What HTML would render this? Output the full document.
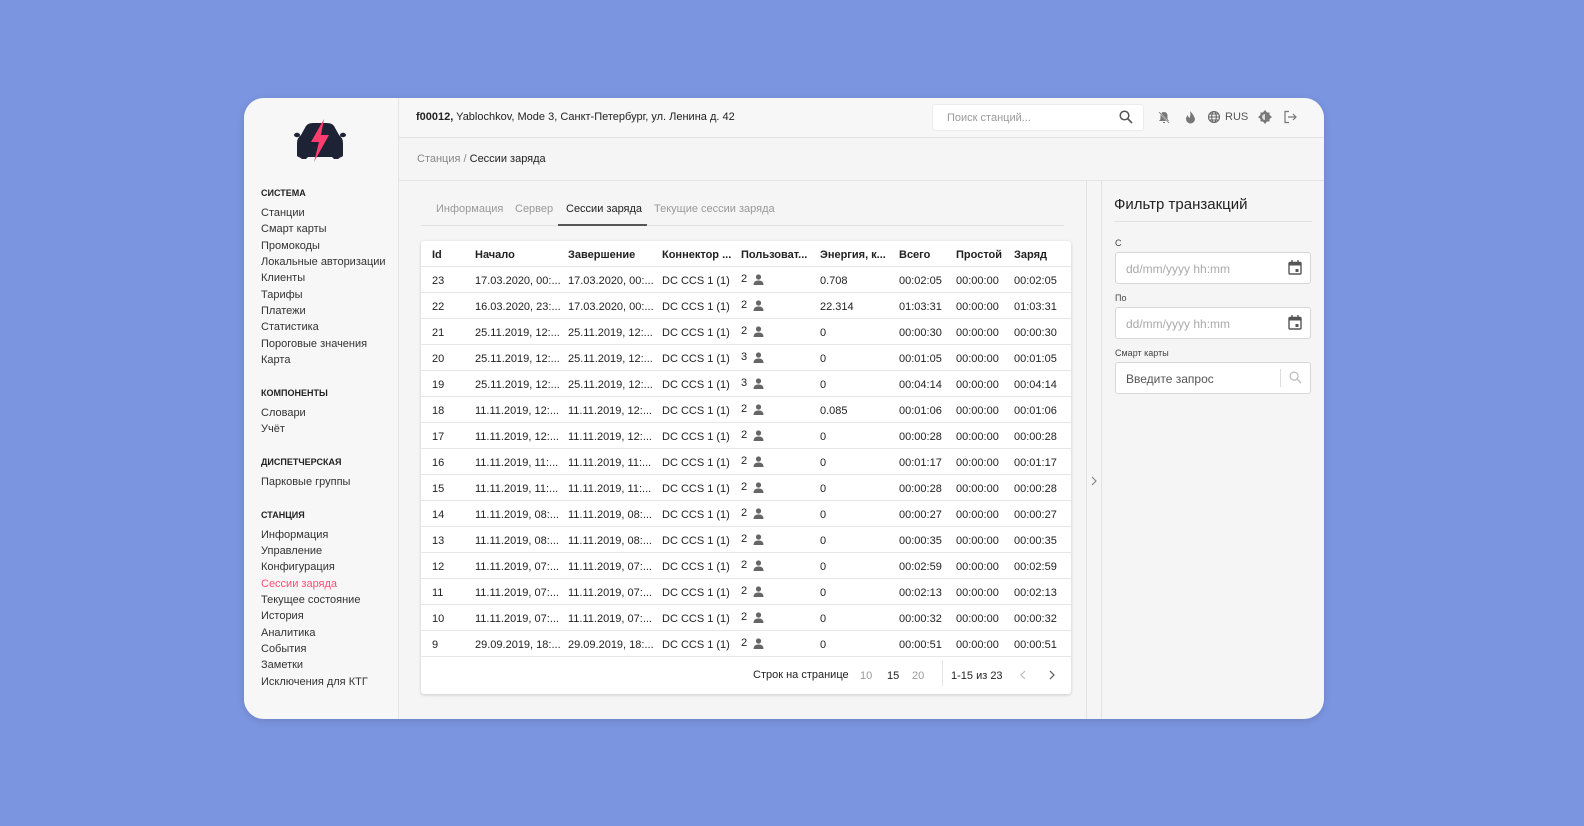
<!DOCTYPE html>
<html><head><meta charset="utf-8"><style>
*{box-sizing:border-box;margin:0;padding:0}
body{width:1584px;height:826px;background:#7b95e0;font-family:"Liberation Sans",Arial,sans-serif;position:relative;overflow:hidden;color:#222}
.card{position:absolute;left:244px;top:98px;width:1080px;height:621px;background:#f5f5f5;border-radius:20px;overflow:hidden;box-shadow:0 2px 8px rgba(0,0,0,.12)}
.side{position:absolute;left:0;top:0;width:155px;height:621px;background:#f7f7f7;border-right:1px solid #e4e4e4}
.side .h{position:absolute;left:17px;font-size:9px;font-weight:bold;color:#222}
.side .i{position:absolute;left:17px;font-size:11px;color:#333}
.hdr{position:absolute;left:155px;top:0;right:0;height:40px;border-bottom:1px solid #e4e4e4;background:#f7f7f7}
.bc{position:absolute;left:155px;top:40px;right:0;height:43px;border-bottom:1px solid #e4e4e4}
.abs{position:absolute}
.tbl{position:absolute;left:177px;top:143px;width:650px;height:453px;background:#fff;border-radius:3px;box-shadow:0 1px 3px rgba(0,0,0,.18)}
.row{position:absolute;left:0;width:650px;height:26px;border-bottom:1px solid #e6e6e6;font-size:11px;color:#222}
.row span{position:absolute;top:8px;white-space:nowrap}
.th span{font-weight:bold}
.inp{position:absolute;left:871px;width:196px;height:32px;background:#fff;border:1px solid #d8d8d8;border-radius:3px;font-size:12px;color:#aaa;padding:9px 10px}
</style></head><body>
<div class="card">
<div class="side">
<svg class="abs" style="left:50px;top:20px" width="52" height="46" viewBox="0 0 52 46"><path d="M3 37 V25 Q3 20 7 17 L12 8 Q14 5 19 5 H33 Q38 5 40 8 L45 17 Q49 20 49 25 V37 Q49 39 47 39 L44 41 H40 L38 39 H14 L12 41 H8 L5 39 Q3 39 3 37Z" fill="#1e2235"/><ellipse cx="3" cy="17" rx="3" ry="2.2" fill="#1e2235"/><ellipse cx="49" cy="17" rx="3" ry="2.2" fill="#1e2235"/><path d="M30 1 L17 24 H25 L20 44 L35 17 H27 Z" fill="#ff3d6e"/></svg>
<div class="h" style="top:90px">СИСТЕМА</div>
<div class="i" style="top:109px">Станции</div>
<div class="i" style="top:125px">Смарт карты</div>
<div class="i" style="top:142px">Промокоды</div>
<div class="i" style="top:158px">Локальные авторизации</div>
<div class="i" style="top:174px">Клиенты</div>
<div class="i" style="top:191px">Тарифы</div>
<div class="i" style="top:207px">Платежи</div>
<div class="i" style="top:223px">Статистика</div>
<div class="i" style="top:240px">Пороговые значения</div>
<div class="i" style="top:256px">Карта</div>
<div class="h" style="top:290px">КОМПОНЕНТЫ</div>
<div class="i" style="top:309px">Словари</div>
<div class="i" style="top:325px">Учёт</div>
<div class="h" style="top:359px">ДИСПЕТЧЕРСКАЯ</div>
<div class="i" style="top:378px">Парковые группы</div>
<div class="h" style="top:412px">СТАНЦИЯ</div>
<div class="i" style="top:431px">Информация</div>
<div class="i" style="top:447px">Управление</div>
<div class="i" style="top:463px">Конфигурация</div>
<div class="i" style="top:480px;color:#ff4d79">Сессии заряда</div>
<div class="i" style="top:496px">Текущее состояние</div>
<div class="i" style="top:512px">История</div>
<div class="i" style="top:529px">Аналитика</div>
<div class="i" style="top:545px">События</div>
<div class="i" style="top:561px">Заметки</div>
<div class="i" style="top:578px">Исключения для КТГ</div>
</div>
<div class="hdr">
<div class="abs" style="left:17px;top:13px;font-size:11px"><b>f00012,</b> Yablochkov, Mode 3, Санкт-Петербург, ул. Ленина д. 42</div>
<div class="abs" style="left:533px;top:6px;width:212px;height:27px;background:#fff;border:1px solid #ececec;border-radius:3px;font-size:11px;color:#999;padding:7px 14px">Поиск станций...</div>
<svg class="abs" style="left:720px;top:12px" width="14" height="14" viewBox="0 0 14 14"><circle cx="5.5" cy="5.5" r="4.3" fill="none" stroke="#555" stroke-width="1.5"/><path d="M8.7 8.7 13 13" stroke="#555" stroke-width="1.6"/></svg>
<svg class="abs" style="left:759px;top:13px" width="12" height="13" viewBox="0 0 12 13"><path d="M6 1 Q2.5 1 2.5 5 V8 L1 10 H11 L9.5 8 V5 Q9.5 1 6 1Z M5 11 H7 V12 H5Z" fill="#777"/><path d="M1 1 11 12" stroke="#f7f7f7" stroke-width="1.5"/><path d="M1 1 11 12" stroke="#777" stroke-width=".8"/></svg>
<svg class="abs" style="left:786px;top:13px" width="11" height="13" viewBox="0 0 11 13"><path d="M5 0 Q9 4 10 8 A4.5 4.5 0 0 1 1 8 Q1 6 3 4 Q3 6 4.5 7 Q6 4 5 0Z" fill="#777"/></svg>
<svg class="abs" style="left:808px;top:12px" width="14" height="14" viewBox="0 0 14 14" fill="none" stroke="#666" stroke-width="1.1"><circle cx="7" cy="7" r="5.5"/><ellipse cx="7" cy="7" rx="2.3" ry="5.5"/><path d="M1.5 7h11M2.5 4h9M2.5 10h9"/></svg>
<div class="abs" style="left:826px;top:13px;font-size:11px;color:#555">RUS</div>
<svg class="abs" style="left:859px;top:12px" width="14" height="14" viewBox="0 0 14 14"><path d="M7 0 9 2.5H11.5V5L14 7 11.5 9V11.5H9L7 14 5 11.5H2.5V9L0 7 2.5 5V2.5H5Z" fill="#777"/><circle cx="7" cy="7" r="3" fill="#ddd"/><path d="M7 4A3 3 0 0 1 7 10Z" fill="#777"/></svg>
<svg class="abs" style="left:884px;top:12px" width="14" height="14" viewBox="0 0 14 14" fill="none" stroke="#777" stroke-width="1.2"><path d="M6 1.5H2V12.5H6M5 7H13M10 4 13 7 10 10"/></svg>
</div>
<div class="bc"><div class="abs" style="left:18px;top:15px;font-size:11px;color:#888">Станция / <span style="color:#222">Сессии заряда</span></div></div>
<div class="abs" style="left:842px;top:83px;width:1px;height:538px;background:#e2e2e2"></div>
<div class="abs" style="left:857px;top:83px;width:1px;height:538px;background:#e2e2e2"></div>
<svg class="abs" style="left:846px;top:378px" width="8" height="10" viewBox="0 0 8 10"><path d="M2 1 6 5 2 9" fill="none" stroke="#888" stroke-width="1.2"/></svg>
<div class="abs" style="left:177px;top:127px;width:643px;height:1px;background:#e2e2e2"></div>
<div class="abs" style="left:192px;top:105px;font-size:11px;color:#999">Информация</div>
<div class="abs" style="left:271px;top:105px;font-size:11px;color:#999">Сервер</div>
<div class="abs" style="left:322px;top:105px;font-size:11px;color:#222">Сессии заряда</div>
<div class="abs" style="left:314px;top:126px;width:89px;height:2px;background:#555"></div>
<div class="abs" style="left:410px;top:105px;font-size:11px;color:#999">Текущие сессии заряда</div>
<div class="tbl">
<div class="row th" style="top:0"><span style="left:11px">Id</span><span style="left:54px">Начало</span><span style="left:147px">Завершение</span><span style="left:241px">Коннектор ...</span><span style="left:320px">Пользоват...</span><span style="left:399px">Энергия, к...</span><span style="left:478px">Всего</span><span style="left:535px">Простой</span><span style="left:593px">Заряд</span></div>
<div id="rows"></div>
<div class="abs" style="left:332px;top:428px;font-size:11px;color:#222">Строк на странице</div>
<div class="abs" style="left:439px;top:429px;font-size:11px;color:#999">10</div>
<div class="abs" style="left:466px;top:429px;font-size:11px;color:#222">15</div>
<div class="abs" style="left:491px;top:429px;font-size:11px;color:#999">20</div>
<div class="abs" style="left:521px;top:419px;width:1px;height:26px;background:#e6e6e6"></div>
<div class="abs" style="left:530px;top:429px;font-size:11px;color:#222">1-15 из 23</div>
<svg class="abs" style="left:598px;top:429px" width="8" height="10" viewBox="0 0 8 10"><path d="M6 1 2 5 6 9" fill="none" stroke="#bbb" stroke-width="1.2"/></svg>
<svg class="abs" style="left:627px;top:429px" width="8" height="10" viewBox="0 0 8 10"><path d="M2 1 6 5 2 9" fill="none" stroke="#555" stroke-width="1.2"/></svg>
</div>
<div class="abs" style="left:870px;top:98px;font-size:15px;color:#222">Фильтр транзакций</div>
<div class="abs" style="left:870px;top:123px;width:198px;height:1px;background:#e2e2e2"></div>
<div class="abs" style="left:871px;top:140px;font-size:9px;color:#444">С</div>
<div class="inp" style="top:154px">dd/mm/yyyy hh:mm</div>
<div class="abs" style="left:871px;top:195px;font-size:9px;color:#444">По</div>
<div class="inp" style="top:209px">dd/mm/yyyy hh:mm</div>
<svg class="abs" style="left:1044px;top:162px" width="14" height="15" viewBox="0 0 14 15"><rect x="1" y="2.5" width="12" height="11.5" rx="1" fill="none" stroke="#555" stroke-width="1.4"/><rect x="1" y="2.5" width="12" height="3" fill="#555"/><path d="M4 0v3M10 0v3" stroke="#555" stroke-width="1.4"/><rect x="7.5" y="9" width="3" height="3" fill="#555"/></svg>
<svg class="abs" style="left:1044px;top:217px" width="14" height="15" viewBox="0 0 14 15"><rect x="1" y="2.5" width="12" height="11.5" rx="1" fill="none" stroke="#555" stroke-width="1.4"/><rect x="1" y="2.5" width="12" height="3" fill="#555"/><path d="M4 0v3M10 0v3" stroke="#555" stroke-width="1.4"/><rect x="7.5" y="9" width="3" height="3" fill="#555"/></svg>
<div class="abs" style="left:871px;top:250px;font-size:9px;color:#444">Смарт карты</div>
<div class="inp" style="top:264px;color:#555;font-size:12px">Введите запрос</div>
<div class="abs" style="left:1036px;top:271px;width:1px;height:18px;background:#ddd"></div>
<svg class="abs" style="left:1045px;top:273px" width="13" height="13" viewBox="0 0 14 14"><circle cx="5.5" cy="5.5" r="4.3" fill="none" stroke="#bbb" stroke-width="1.3"/><path d="M8.7 8.7 13 13" stroke="#bbb" stroke-width="1.4"/></svg>
</div>
<script>
var d=[[23,"17.03.2020, 00:...","17.03.2020, 00:...",2,"0.708","00:02:05"],[22,"16.03.2020, 23:...","17.03.2020, 00:...",2,"22.314","01:03:31"],[21,"25.11.2019, 12:...","25.11.2019, 12:...",2,"0","00:00:30"],[20,"25.11.2019, 12:...","25.11.2019, 12:...",3,"0","00:01:05"],[19,"25.11.2019, 12:...","25.11.2019, 12:...",3,"0","00:04:14"],[18,"11.11.2019, 12:...","11.11.2019, 12:...",2,"0.085","00:01:06"],[17,"11.11.2019, 12:...","11.11.2019, 12:...",2,"0","00:00:28"],[16,"11.11.2019, 11:...","11.11.2019, 11:...",2,"0","00:01:17"],[15,"11.11.2019, 11:...","11.11.2019, 11:...",2,"0","00:00:28"],[14,"11.11.2019, 08:...","11.11.2019, 08:...",2,"0","00:00:27"],[13,"11.11.2019, 08:...","11.11.2019, 08:...",2,"0","00:00:35"],[12,"11.11.2019, 07:...","11.11.2019, 07:...",2,"0","00:02:59"],[11,"11.11.2019, 07:...","11.11.2019, 07:...",2,"0","00:02:13"],[10,"11.11.2019, 07:...","11.11.2019, 07:...",2,"0","00:00:32"],[9,"29.09.2019, 18:...","29.09.2019, 18:...",2,"0","00:00:51"]];
var h="",u='<svg style="position:absolute;left:332px;top:7px" width="11" height="11" viewBox="0 0 11 11"><circle cx="5.5" cy="3" r="2.6" fill="#666"/><path d="M0.5 11Q0.5 6.5 5.5 6.5Q10.5 6.5 10.5 11Z" fill="#666"/></svg>';
d.forEach(function(r,i){h+='<div class="row" style="top:'+(26+i*26)+'px"><span style="left:11px">'+r[0]+'</span><span style="left:54px">'+r[1]+'</span><span style="left:147px">'+r[2]+'</span><span style="left:241px">DC CCS 1 (1)</span><span style="left:320px;top:6px">'+r[3]+'</span>'+u+'<span style="left:399px">'+r[4]+'</span><span style="left:478px">'+r[5]+'</span><span style="left:535px">00:00:00</span><span style="left:593px">'+r[5]+'</span></div>'});
document.getElementById("rows").outerHTML=h;
</script>
</body></html>
